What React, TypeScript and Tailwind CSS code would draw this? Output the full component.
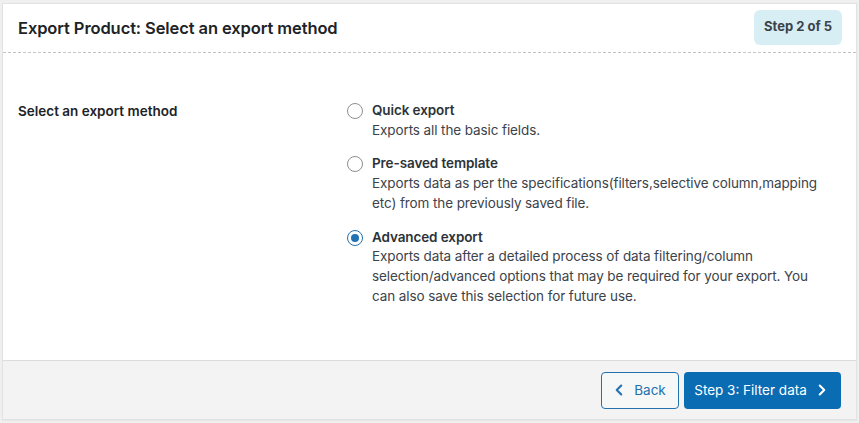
import { ChevronLeft, ChevronRight } from "lucide-react";

const options = [
  {
    id: "quick",
    title: "Quick export",
    desc: "Exports all the basic fields.",
    checked: false,
  },
  {
    id: "template",
    title: "Pre-saved template",
    desc: "Exports data as per the specifications(filters,selective column,mapping etc) from the previously saved file.",
    checked: false,
  },
  {
    id: "advanced",
    title: "Advanced export",
    desc: "Exports data after a detailed process of data filtering/column selection/advanced options that may be required for your export. You can also save this selection for future use.",
    checked: true,
  },
];

function Radio({ checked }: { checked: boolean }) {
  return (
    <span
      className={
        checked
          ? "mt-[2px] flex h-4 w-4 shrink-0 items-center justify-center rounded-full border border-[#2271b1] bg-white"
          : "mt-[2px] flex h-4 w-4 shrink-0 items-center justify-center rounded-full border border-[#8c8f94] bg-white"
      }
    >
      {checked && <span className="h-2 w-2 rounded-full bg-[#2271b1]" />}
    </span>
  );
}

export default function App() {
  return (
    <div
      className="min-h-[423px] w-[859px] bg-[#f0f0f1] pl-[2px] pr-[2px] pt-[3px]"
      style={{ fontFamily: "Inter, 'Noto Sans', sans-serif" }}
    >
      <div className="flex h-[417px] w-[855px] flex-col border border-[#e2e2e4] bg-white shadow-[0_1px_1px_rgba(0,0,0,0.04)]">
        {/* Header */}
        <div className="flex h-[49px] items-center justify-between border-b border-dashed border-[#c3c4c7] pl-[15px] pr-[14px]">
          <h1 className="text-[16.5px] font-semibold tracking-[-0.1px] text-[#1d2327]">
            Export Product: Select an export method
          </h1>
          <span className="mt-[-2px] flex h-[35px] items-center rounded-[6px] bg-[#d8eef5] px-[10px] text-[13px] font-bold text-[#3c434a]">
            Step 2 of 5
          </span>
        </div>

        {/* Body */}
        <div className="flex flex-1 pl-[15px] pt-[48px]">
          <div className="w-[329px] text-[13.5px] font-semibold leading-[20px] text-[#1d2327]">
            Select an export method
          </div>
          <div className="flex w-[480px] flex-col gap-[14px]">
            {options.map((o) => (
              <label key={o.id} className="flex items-start gap-[9px]">
                <Radio checked={o.checked} />
                <div className="text-[13.5px] leading-[19.7px] tracking-[-0.1px] text-[#3c434a]">
                  <div className="font-semibold text-[#2c3338]">{o.title}</div>
                  <div>{o.desc}</div>
                </div>
              </label>
            ))}
          </div>
        </div>

        {/* Footer */}
        <div className="flex h-[59px] items-center justify-end gap-[5px] border-t border-[#dcdcde] bg-[#f3f3f4] pr-[15px]">
          <button className="flex h-[37px] w-[78px] items-center justify-center gap-[6px] rounded-[4px] border border-[#2271b1] bg-[#f6f7f7] text-[13.5px] text-[#2271b1]">
            <ChevronLeft size={18} strokeWidth={2.8} className="ml-[-4px]" />
            Back
          </button>
          <button className="flex h-[37px] w-[157px] items-center justify-center gap-[6px] rounded-[4px] bg-[#0a6cb3] text-[13.5px] text-white">
            Step 3: Filter data
            <ChevronRight size={18} strokeWidth={2.8} />
          </button>
        </div>
      </div>
    </div>
  );
}
